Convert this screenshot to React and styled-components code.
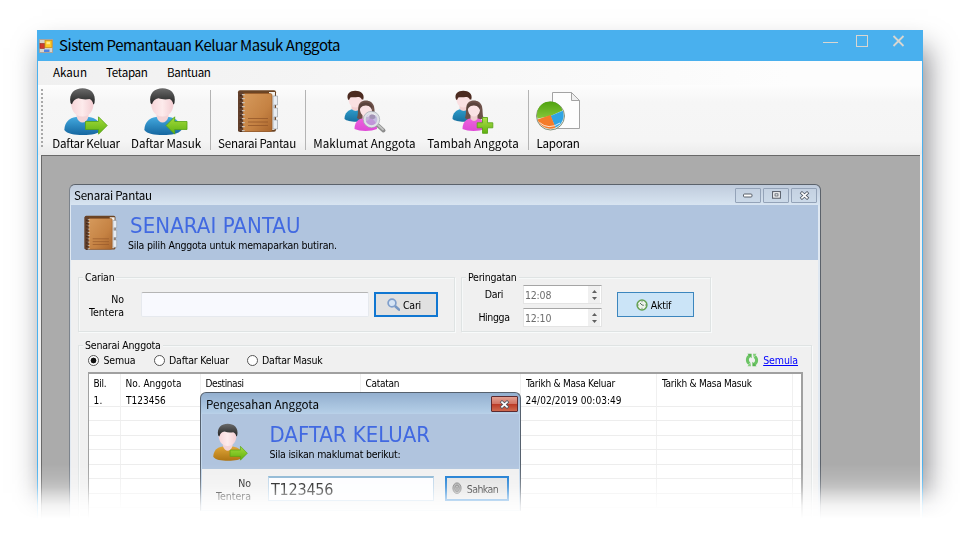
import React from "react";
import styled, { createGlobalStyle, css } from "styled-components";

const Global = createGlobalStyle`
  * { box-sizing: border-box; }
  body { margin: 0; background: #fff; overflow: hidden; }
`;

const segoe = css`font-family: "Noto Sans CJK SC", "Open Sans", sans-serif;`;
const tahoma = css`font-family: "DejaVu Sans Condensed", "DejaVu Sans", sans-serif;`;

/* ---------- page and main window ---------- */

const Stage = styled.main`
  width: 960px;
  height: 560px;
  padding: 30px 0 0 37px;
  overflow: hidden;
  color: #000;
  mask-image: linear-gradient(#000 464px, rgba(0, 0, 0, 0.87) 478px, rgba(0, 0, 0, 0.7) 487px, rgba(0, 0, 0, 0.4) 496px, rgba(0, 0, 0, 0.13) 506px, transparent 519px);
`;

const MainWindow = styled.section`
  width: 886px;
  height: 600px;
  display: flex;
  flex-direction: column;
  border: 1px solid #4ab1ef;
  border-top: 0;
  background: #f0f0f0;
  box-shadow: 5px 18px 26px rgba(20, 20, 30, 0.5);
`;

const TitleBar = styled.header`
  height: 31px;
  margin: 0 -1px;
  padding-left: 2px;
  display: flex;
  align-items: center;
  background: #49b0ee;
`;

const AppTitle = styled.h1`
  ${segoe}
  flex: 1;
  margin: 0 0 2px 6px;
  font-size: 15px;
  font-weight: 400;
  line-height: 20px;
  letter-spacing: -0.45px;
  white-space: nowrap;
`;

const WindowControls = styled.div`
  width: 83px;
  height: 13px;
  margin: 0 17px 8px 0;
  display: flex;
  align-items: center;
  justify-content: space-between;
`;

const MenuBar = styled.nav`
  height: 24px;
  flex: none;
  display: flex;
  align-items: center;
  padding: 0 0 2px 15px;
  background: linear-gradient(90deg, #f0f0f0, #fdfdfd 85%);
`;

const MenuItem = styled.span`
  ${segoe}
  width: ${(p) => p.$w}px;
  font-size: 11.6px;
  line-height: 16px;
  letter-spacing: ${(p) => p.$ls || 0}px;
  white-space: nowrap;
`;

const Toolbar = styled.div`
  height: 70px;
  flex: none;
  display: flex;
  padding: 3px 0 0 3px;
  background: linear-gradient(#fdfdfd, #f6f6f6 25%, #f5f5f5 80%, #ebebeb);
  border-radius: 0 0 3px 0;
`;

const Grip = styled.i`
  width: 2px;
  height: 60px;
  margin: 1px 9px 0 0;
  background: repeating-linear-gradient(#a9a9a9 0 2px, transparent 2px 4px);
`;

const Tool = styled.button`
  ${segoe}
  width: ${(p) => p.$w}px;
  margin: 0 ${(p) => p.$gap || 0}px 0 0;
  padding: 0;
  border: 0;
  background: none;
  display: flex;
  flex-direction: column;
  align-items: center;
  justify-content: flex-start;
  color: #000;
  font-size: 11.6px;
  line-height: 16px;
  letter-spacing: ${(p) => p.$ls || 0}px;
  white-space: nowrap;

  svg { flex: none; margin-bottom: -1px; }
`;

const ToolSeparator = styled.i`
  width: 1px;
  height: 60px;
  margin: 2px 7px 0 0;
  background: #b4b4b4;
`;

const Workspace = styled.div`
  flex: 1;
  margin: 0 2px 0 3px;
  padding: 28px 0 0 27px;
  border: solid #696969;
  border-width: 1px 0 0 1px;
  background: #ababab;
`;

/* ---------- child windows ---------- */

const ChildWindow = styled.section`
  position: relative;
  width: 752px;
  height: 420px;
  padding: 0 2px 0 1px;
  border: 1px solid #5b626b;
  border-left-color: #7c838c;
  border-radius: 6px 6px 0 0;
  background: linear-gradient(#bfcbdc, #d6e3f0 19px, #dfe8f2 22px, #e4ebf2);
`;

const Dialog = styled.section`
  position: absolute;
  left: 130px;
  top: 207px;
  width: 321px;
  height: 119px;
  padding: 0 1px 0 1px;
  border: 1px solid #56616e;
  border-bottom-color: #c4d8ea;
  border-radius: 6px 6px 0 0;
  background: linear-gradient(#93afcf, #b3cde6 19px, #bed3ea 22px, #c6dbee);
`;

const ChildTitle = styled.header`
  ${segoe}
  height: ${(p) => (p.$dialog ? 21 : 20)}px;
  display: flex;
  align-items: center;
  justify-content: space-between;
  padding: ${(p) => (p.$dialog ? "1px 1px 0 4px" : "0 1px 0 3px")};
  font-size: 11.6px;
  line-height: 18px;
  letter-spacing: ${(p) => (p.$dialog ? 0 : -0.26)}px;
`;

const CaptionButtons = styled.div`
  display: flex;
  gap: 2px;
`;

const CaptionButton = styled.button`
  width: ${(p) => (p.$danger ? 27 : 26)}px;
  height: ${(p) => (p.$danger ? 16 : 15)}px;
  padding: 0;
  display: flex;
  align-items: center;
  justify-content: center;
  border: 1px solid ${(p) => (p.$danger ? "#5c2a30" : "#94a3b8")};
  border-radius: 1px;
  background: ${(p) =>
    p.$danger
      ? "linear-gradient(#e2a092, #d27464 48%, #bb3a26 52%, #cf6a50)"
      : "linear-gradient(#c5d2e2, #cbd9e8)"};
`;

const Banner = styled.div`
  height: 55px;
  display: flex;
  padding: 9px 0 0 ${(p) => p.$left}px;
  background: #b0c4de;
`;

const BannerText = styled.div`
  ${tahoma}
  margin-left: ${(p) => p.$left}px;
`;

const BannerTitle = styled.h2`
  margin: 0 0 0 ${(p) => p.$indent || 0}px;
  font-size: 22px;
  font-weight: 400;
  line-height: 24px;
  letter-spacing: ${(p) => p.$ls || 0}px;
  color: #4169e1;
  white-space: nowrap;
`;

const BannerHint = styled.p`
  margin: 0;
  font-size: 10.5px;
  line-height: 14px;
  letter-spacing: -0.22px;
  white-space: nowrap;
`;

const ChildBody = styled.div`
  ${tahoma}
  height: 345px;
  padding: 17px 7px 0;
  background: #f0f0f0;
  font-size: 10.5px;
`;

/* ---------- form parts ---------- */

const GroupRow = styled.div`
  display: flex;
  gap: 6px;
  margin-bottom: 13px;
`;

const Group = styled.div`
  width: ${(p) => p.$w}px;
  height: ${(p) => p.$h}px;
  display: flex;
  flex-direction: column;
  border: 1px solid #dfe3e3;
  box-shadow: inset 1px 1px #f6f8f8, 1px 1px #f8fafa;
`;

const Legend = styled.span`
  align-self: flex-start;
  height: 16px;
  flex: none;
  margin: -9px 0 0 4px;
  padding: 0 2px;
  background: #f0f0f0;
  line-height: 16px;
  letter-spacing: ${(p) => p.$ls}px;
  white-space: nowrap;
`;

const SearchRow = styled.div`
  display: flex;
  padding-top: 7px;
`;

const StackedLabel = styled.label`
  width: ${(p) => p.$w}px;
  flex: none;
  padding-top: 1px;
  text-align: right;
  font-size: 10.5px;
  line-height: 12.5px;
`;

const SearchInput = styled.input`
  width: 228px;
  height: 25px;
  margin: 0 5px 0 17px;
  border: 1px solid #e6e9ee;
  border-top-color: #b5b5b5;
  border-radius: 2px;
  background: #f8f9fe;
`;

const ActionButton = styled.button`
  ${tahoma}
  width: ${(p) => p.$w || 64}px;
  height: 25px;
  padding: 0 4px 0 0;
  display: flex;
  align-items: center;
  justify-content: center;
  gap: ${(p) => p.$gap || 3}px;
  border: ${(p) => (p.$active ? "1px solid #3c86be" : "2px solid #1177d1")};
  background: ${(p) => (p.$active ? "#cbe4f7" : "#e1e1e1")};
  color: #000;
  font-size: 10.5px;
  letter-spacing: ${(p) => p.$ls || 0}px;
`;

const ReminderRow = styled.div`
  display: flex;
`;

const TimeGrid = styled.div`
  display: grid;
  grid-template-columns: 61px 79px;
  grid-auto-rows: 19px;
  row-gap: 4px;
  margin-right: 15px;
`;

const TimeLabel = styled.label`
  padding-left: 3px;
  text-align: center;
  line-height: 19px;
  letter-spacing: ${(p) => p.$ls}px;
`;

const TimeBox = styled.div`
  height: 19px;
  display: flex;
  align-items: center;
  justify-content: space-between;
  padding: 0 1px;
  border: 1px solid #e4e4e4;
  border-top-color: #a5a5a5;
  background: #fff;
  color: #6d6d6d;
  letter-spacing: -0.2px;
`;

const Stepper = styled.span`
  width: 12px;
  height: 17px;
  display: flex;
  flex-direction: column;
  align-items: center;
  justify-content: center;
  gap: 4px;
  background: #f0f0f0;
`;

const ActiveSlot = styled.div`
  padding-top: 7px;
`;

const FilterRow = styled.div`
  height: 14px;
  display: flex;
  align-items: center;
  padding: 0 13px 0 9px;
`;

const Radio = styled.label`
  width: ${(p) => p.$w}px;
  display: flex;
  align-items: center;
  gap: 4.5px;
  letter-spacing: -0.19px;
  white-space: nowrap;
`;

const RadioDot = styled.i`
  width: 11px;
  height: 11px;
  border: 1px solid #555;
  border-radius: 50%;
  background: ${(p) => (p.$on ? "radial-gradient(circle, #111 0 2.6px, #fff 3.2px)" : "#fff")};
`;

const ResetLink = styled.a`
  margin-left: auto;
  display: flex;
  align-items: center;
  gap: 4px;
  color: #0000ff;
  text-decoration: underline;
  letter-spacing: -0.1px;
`;

/* ---------- member table ---------- */

const Table = styled.div`
  width: 715px;
  height: 230px;
  margin: 5px 0 0 9px;
  border: solid #a0a0a0;
  border-width: 2px 2px 0 1px;
  background: #fff;
  font-size: 10px;
`;

const TableRow = styled.div`
  height: ${(p) => p.$h}px;
  display: grid;
  grid-template-columns: 32px 80px 160px 160px 136px 136px 1fr;
  border-bottom: 1px solid ${(p) => (p.$head ? "transparent" : "#ededed")};
`;

const Cell = styled.span`
  padding-left: ${(p) => p.$pad ?? 5}px;
  border-right: 1px solid #f0f0f0;
  line-height: ${(p) => p.$lh || 20}px;
  letter-spacing: ${(p) => p.$ls || 0}px;
  white-space: nowrap;
  &:last-child { border: 0; }
`;

/* ---------- confirmation dialog ---------- */

const DialogBody = styled.div`
  ${tahoma}
  height: 41px;
  display: flex;
  padding: 7px 0 0 7px;
  background: #f0f0f0;
`;

const DialogInput = styled.div`
  width: 166px;
  height: 25px;
  margin: 0 11px 0 17px;
  padding-left: 2px;
  border: 1px solid #b9d3e8;
  border-top: 2px solid #88b4d2;
  background: #fcfdff;
  font-size: 16px;
  line-height: 23px;
  letter-spacing: -0.22px;
`;

/* ---------- icons ---------- */

const FormIcon = () => (
  <svg width="14" height="14" viewBox="0 0 14 14">
    <rect width="14" height="14" fill="#d8d3cc" />
    <path d="M0 .5h14M.5 0v14M13.5 0v14M0 13.5h14" stroke="#aaa49b" />
    <rect x="1" y="4.5" width="4.5" height="5" fill="#d03a2c" stroke="#8f2d22" strokeWidth=".6" />
    <rect x="6" y="1.5" width="7" height="7" fill="#ffc828" stroke="#c58a10" strokeWidth=".7" />
    <rect x="7.5" y="2.7" width="3.5" height="2.5" fill="#ffe98c" />
    <rect x="5" y="10.5" width="5.5" height="2.5" fill="#4c83e6" />
  </svg>
);

const ControlGlyphs = () => (
  <svg width="83" height="13" viewBox="0 0 83 13" fill="none" stroke="#d9d6d0">
    <path d="M0 7.5h15" />
    <rect x="33.5" y=".5" width="11" height="11" />
    <path d="M70.5 1 80.5 11M80.5 1 70.5 11" strokeWidth="1.8" />
  </svg>
);

const Person = ({ width = 44, height = 48, shirt = ["#43a9df", "#1566a0"], id, dir }) => (
  <svg width={width} height={height} viewBox="0 0 44 48">
    <defs>
      <linearGradient id={`${id}s`} x1="0" y1="0" x2="0" y2="1">
        <stop stopColor={shirt[0]} /><stop offset="1" stopColor={shirt[1]} />
      </linearGradient>
      <linearGradient id={`${id}f`}><stop stopColor="#f7d5d8" /><stop offset=".5" stopColor="#fdebec" /><stop offset="1" stopColor="#f3cdd2" /></linearGradient>
      <linearGradient id={`${id}h`} x1="0" y1="0" x2="0" y2="1"><stop stopColor="#6a6a6a" /><stop offset="1" stopColor="#222" /></linearGradient>
      <linearGradient id={`${id}g`} x1="0" y1="0" x2="0" y2="1"><stop stopColor="#a4dc3c" /><stop offset="1" stopColor="#5fb010" /></linearGradient>
    </defs>
    <path d="M.3 42C.7 34 5 30 12 29h13c7 1 12 5 12.500 13-3 4-10 5-18.500 5S3 46 .3 42Z" fill={`url(#${id}s)`} />
    <path d="M12.500 22h12v6.500c-1 4-3.500 6-6 6s-5-2-6-6Z" fill="#f4d4d7" />
    <path d="M7.200 12q11-5 22.300 0c.8 9-3 16.500-11 16.500S6.200 21 7.200 12Z" fill={`url(#${id}f)`} />
    <path d="M6.500 15C4.500 5 11 .3 18.500.3S32.500 5 30.500 15q-.4 1-1.200 1.500c-.4-3-1.800-4.500-3.800-5.500-4 1-8 .3-11-.7-3.500.5-5.500 2.500-6.500 6Q7 16 6.500 15Z" fill={`url(#${id}h)`} />
    {dir === "out" ? (
      <path d="M21.500 33.500h13v-4.700l8.700 8.700-8.700 8.700v-4.700h-13Z" fill={`url(#${id}g)`} stroke="#55a313" strokeWidth=".8" />
    ) : (
      <path d="M43 33.500H30.700v-4.700L22 37.500l8.700 8.700v-4.700H43Z" fill={`url(#${id}g)`} stroke="#55a313" strokeWidth=".8" />
    )}
  </svg>
);

const Book = ({ width, height, id }) => (
  <svg width={width} height={height} viewBox="0 0 44 48">
    <defs>
      <linearGradient id={id} x1="0" y1="0" x2="1" y2="1"><stop stopColor="#d69a5c" /><stop offset=".6" stopColor="#c58243" /><stop offset="1" stopColor="#a9652c" /></linearGradient>
    </defs>
    <rect x="3" y="2.300" width="38" height="41.500" rx="2" fill="#6b4424" />
    <path d="M34 4h6l-.5 38H34Z" fill="#f4f2ee" />
    <path d="M38 8h4.500v9H39v3h3.500v9H39v3h3.500v9H38Z" fill="#e9edf2" stroke="#8d939a" strokeWidth=".6" />
    <rect x="8" y="5.500" width="29" height="38" rx="1.800" fill={`url(#${id})`} stroke="#985a28" strokeWidth=".7" />
    <rect x="3" y="3.500" width="5" height="40" rx="1" fill="#62402c" />
    <path d="M8.300 6v37" stroke="#c9c2ba" strokeWidth="2.800" strokeDasharray="1.200 2.800" />
    <path d="M5.800 7v37" stroke="#3d261b" strokeWidth="2" strokeDasharray="1.300 2.700" />
    <path d="M13 30.500h20M13 34h20M13 37.500h20" stroke="#94572a" strokeWidth=".8" />
  </svg>
);

const Couple = ({ id, children }) => (
  <svg width="44" height="48" viewBox="0 0 44 48">
    <defs>
      <linearGradient id={`${id}b`} x1="0" y1="0" x2="0" y2="1"><stop stopColor="#2e9dcb" /><stop offset="1" stopColor="#17709f" /></linearGradient>
      <linearGradient id={`${id}p`} x1="0" y1="0" x2="0" y2="1"><stop stopColor="#ec62dc" /><stop offset="1" stopColor="#df49d7" /></linearGradient>
      <linearGradient id={`${id}g`} x1="0" y1="0" x2="0" y2="1"><stop stopColor="#b0e04b" /><stop offset="1" stopColor="#5fb010" /></linearGradient>
    </defs>
    <path d="M1.500 31c0-6 4-9.500 9-10h6l4 4v8C13 34.500 4 33.500 1.500 31Z" fill={`url(#${id}b)`} />
    <path d="M8.500 15h8v6q-3.500 4-8 0Z" fill="#f2cfd1" />
    <path d="M5.500 9h14c1 5-2 10.500-7 10.500S4.800 14 5.500 9Z" fill="#fae0e2" />
    <path d="M5 11.500C3 6 7 2.700 12.300 2.700S22 6 20.300 11.500h-1.500c-.8-2-2.300-2.500-4-2.500-3 .5-6 0-7.500.5L6 12Z" fill="#4c2b20" />
    <path d="M14 30c1.500-4 .5-8 1.500-12 1-4 4-5.500 7.500-5.500s7 2 8 6c1 4 .2 8 1.500 11.500L27 33l-10-1Z" fill="#6d5149" />
    <path d="M11.500 41c0-6 3-10 8-10.500h7c5 .5 7.500 4.500 7.500 10.500-6 2.500-17 2.500-22.500 0Z" fill={`url(#${id}p)`} />
    <path d="M19.500 26h7v5q-3.500 4-7 0Z" fill="#f0cdd0" />
    <path d="M17 19q6-3 12 0c.8 5-2 9.500-6 9.500S16.300 24 17 19Z" fill="#fae2e4" />
    <path d="M16.500 22c1-3 3.500-5 6-5s5 1.500 6.500 5c1.500-4-1.500-7.500-6.500-7.500s-8 4-6 7.500Z" fill="#5b433c" />
    {children}
  </svg>
);

const Lens = () => (
  <>
    <path d="m34.500 37 6 5.500" stroke="#8c8c8c" strokeWidth="4" strokeLinecap="round" />
    <path d="m35 37 5 4.500" stroke="#c2c2c2" strokeWidth="1.800" strokeLinecap="round" />
    <circle cx="28.500" cy="31.500" r="7" fill="#b3a9d8" fillOpacity=".75" stroke="#dfe2e6" strokeWidth="2.400" />
    <circle cx="28.500" cy="31.500" r="8.200" fill="none" stroke="#98a0aa" strokeWidth=".6" />
    <path d="M24.500 29q3-5 8-2" stroke="#fff" strokeOpacity=".7" fill="none" />
  </>
);

const Report = () => (
  <svg width="44" height="48" viewBox="0 0 44 48">
    <defs>
      <linearGradient id="rg" x1="0" y1="0" x2="0" y2="1"><stop stopColor="#4fa30f" /><stop offset="1" stopColor="#86c73a" /></linearGradient>
    </defs>
    <path d="M16.500 4.500h19l8 8v28h-27Z" fill="#fdfdfd" stroke="#a3a3a3" />
    <path d="M35.500 4.500v8h8Z" fill="#f0f0f0" stroke="#a3a3a3" />
    <circle cx="14.500" cy="28" r="14" fill="#e9ece6" stroke="#78876f" strokeWidth=".9" />
    <path d="M14.500 28 1.600 30.500A13 13 0 0 1 26.500 22.500Z" fill="url(#rg)" />
    <path d="M14.500 28 26.700 22.800A13 13 0 0 1 19.500 39.500Z" fill="#2fa4e4" />
    <path d="M14.500 27 19.500 39.500A13 13 0 0 1 1.600 31.500Z" fill="#f47c2a" />
    <path d="M3.500 34.500q9 8 20.500.5" stroke="#fff" strokeOpacity=".8" fill="none" />
  </svg>
);

const MinGlyph = () => (
  <svg width="10" height="6" viewBox="0 0 10 6"><rect x=".5" y="2" width="8.500" height="3" rx="1" fill="#fff" stroke="#59606b" /></svg>
);
const MaxGlyph = () => (
  <svg width="9" height="8" viewBox="0 0 9 8"><rect x=".6" y=".6" width="7.800" height="6.600" fill="#fff" stroke="#59606b" strokeWidth="1.100" /><rect x="3" y="2.800" width="3" height="2.200" fill="none" stroke="#59606b" strokeWidth=".9" /></svg>
);
const CloseGlyph = () => (
  <svg width="11" height="9" viewBox="0 0 11 9"><path d="m3 2.200 5 4.600M8 2.200 3 6.800" stroke="#4f5763" strokeWidth="3.200" strokeLinecap="square" /><path d="m3 2.200 5 4.600M8 2.200 3 6.800" stroke="#fff" strokeWidth="1.700" strokeLinecap="square" /></svg>
);

const SearchIcon = () => (
  <svg width="13" height="13" viewBox="0 0 13 13"><path d="m8 8 4 3.600" stroke="#7597c4" strokeWidth="2.600" strokeLinecap="round" /><circle cx="5" cy="5" r="3.900" fill="#d5e4f5" stroke="#809fcb" strokeWidth="1.700" /></svg>
);
const ClockIcon = () => (
  <svg width="12" height="12" viewBox="0 0 12 12"><circle cx="6" cy="6" r="4.900" fill="#edf3ea" stroke="#63a052" strokeWidth="1.500" /><path d="M6 6 4 4M6 6l1.800.3M6 2.300v.9M6 8.800v.9M2.300 6h.8M9 6h.8" stroke="#567064" fill="none" /></svg>
);
const RefreshIcon = () => (
  <svg width="14" height="14" viewBox="0 0 14 14" fill="none" stroke="#6cc465" strokeWidth="3">
    <path d="M5 2.800C1.800 4 1.500 8.600 4.400 10.600" /><path d="M9 11.200c3.200-1.200 3.500-5.800.6-7.800" />
    <path d="M2.400.8h4.200v4.400ZM11.600 13.200H7.400V8.800Z" fill="#58b551" stroke="none" />
    <path d="M8 .8h3.600L8.600 4.600ZM6 13.200H2.400L5.400 9.400Z" fill="#83cf7b" stroke="none" />
  </svg>
);
const FingerprintIcon = () => (
  <svg width="10" height="13" viewBox="0 0 10 13" fill="none" stroke="#666" strokeWidth=".9">
    <ellipse cx="5" cy="6.200" rx="4.100" ry="5.300" fill="#a8a8a8" />
    <ellipse cx="5" cy="6.400" rx="2.200" ry="3.400" /><path d="M5 5v4.500" />
  </svg>
);
const Arrow = ({ down }) => (
  <svg width="5" height="3" viewBox="0 0 5 3"><path d={down ? "M0 0h5L2.500 3Z" : "M0 3h5L2.500 0Z"} fill="#606060" /></svg>
);

const TimeField = ({ value }) => (
  <TimeBox>
    {value}
    <Stepper><Arrow /><Arrow down /></Stepper>
  </TimeBox>
);

const HEADERS = [
  ["Bil.", -0.3, 4.5],
  ["No. Anggota", 0.04, 4.5],
  ["Destinasi", -0.38, 4.5],
  ["Catatan", -0.25, 4.5],
  ["Tarikh & Masa Keluar", -0.25, 5],
  ["Tarikh & Masa Masuk", -0.25, 5],
  ["", 0, 0],
];
const RECORD = [["1.", 0.2, 4.5], ["T123456", 0, 5], ["", 0, 0], ["", 0, 0], ["24/02/2019 00:03:49", 0.05, 4.5], ["", 0, 0], ["", 0, 0]];
const EMPTY_ROWS = [14, 15, 14, 15, 14, 15, 14];

export default function App() {
  return (
    <>
      <Global />
      <Stage>
        <MainWindow>
          <TitleBar>
            <FormIcon />
            <AppTitle>Sistem Pemantauan Keluar Masuk Anggota</AppTitle>
            <WindowControls><ControlGlyphs /></WindowControls>
          </TitleBar>
          <MenuBar>
            <MenuItem $w={53} $ls={0}>Akaun</MenuItem>
            <MenuItem $w={61} $ls={-0.28}>Tetapan</MenuItem>
            <MenuItem $w={60} $ls={-0.38}>Bantuan</MenuItem>
          </MenuBar>
          <Toolbar>
            <Grip />
            <Tool $w={68} $gap={11} $ls={-0.27}><Person id="pa" dir="out" />Daftar Keluar</Tool>
            <Tool $w={70} $gap={9} $ls={-0.07}><Person id="pb" dir="in" />Daftar Masuk</Tool>
            <ToolSeparator />
            <Tool $w={78} $gap={9} $ls={-0.26}><Book width={44} height={48} id="ba" />Senarai Pantau</Tool>
            <ToolSeparator />
            <Tool $w={103} $gap={11} $ls={0.08}><Couple id="ca"><Lens /></Couple>Maklumat Anggota</Tool>
            <Tool $w={92} $gap={9} $ls={0.04}>
              <Couple id="cb">
                <path d="M31.500 29.500h5v5.300h5.300v5h-5.300v5.500h-5v-5.500h-5.300v-5h5.300Z" fill="url(#cbg)" stroke="#5ba51a" strokeWidth=".9" />
              </Couple>
              Tambah Anggota
            </Tool>
            <ToolSeparator />
            <Tool $w={44} $ls={-0.28}><Report />Laporan</Tool>
          </Toolbar>
          <Workspace>
            <ChildWindow>
              <ChildTitle>
                Senarai Pantau
                <CaptionButtons>
                  <CaptionButton><MinGlyph /></CaptionButton>
                  <CaptionButton><MaxGlyph /></CaptionButton>
                  <CaptionButton><CloseGlyph /></CaptionButton>
                </CaptionButtons>
              </ChildTitle>
              <Banner $left={10.5}>
                <Book width={36} height={39} id="bb" />
                <BannerText $left={10.5}>
                  <BannerTitle $indent={2} $ls={0.1}>SENARAI PANTAU</BannerTitle>
                  <BannerHint>Sila pilih Anggota untuk memaparkan butiran.</BannerHint>
                </BannerText>
              </Banner>
              <ChildBody>
                <GroupRow>
                  <Group $w={377} $h={55}>
                    <Legend $ls={-0.2}>Carian</Legend>
                    <SearchRow>
                      <StackedLabel $w={45}>No<br />Tentera</StackedLabel>
                      <SearchInput />
                      <ActionButton $ls={-0.2}><SearchIcon />Cari</ActionButton>
                    </SearchRow>
                  </Group>
                  <Group $w={250} $h={55}>
                    <Legend $ls={-0.24}>Peringatan</Legend>
                    <ReminderRow>
                      <TimeGrid>
                        <TimeLabel $ls={-0.3}>Dari</TimeLabel><TimeField value="12:08" />
                        <TimeLabel $ls={-0.38}>Hingga</TimeLabel><TimeField value="12:10" />
                      </TimeGrid>
                      <ActiveSlot>
                        <ActionButton $w={77} $active $ls={-0.25}><ClockIcon />Aktif</ActionButton>
                      </ActiveSlot>
                    </ReminderRow>
                  </Group>
                </GroupRow>
                <Group $w={734} $h={260}>
                  <Legend $ls={-0.2}>Senarai Anggota</Legend>
                  <FilterRow>
                    <Radio $w={65.5}><RadioDot $on />Semua</Radio>
                    <Radio $w={93}><RadioDot />Daftar Keluar</Radio>
                    <Radio $w={93}><RadioDot />Daftar Masuk</Radio>
                    <ResetLink><RefreshIcon />Semula</ResetLink>
                  </FilterRow>
                  <Table>
                    <TableRow $h={18} $head>
                      {HEADERS.map(([text, ls, pad], i) => <Cell key={i} $ls={ls} $pad={pad}>{text}</Cell>)}
                    </TableRow>
                    <TableRow $h={15}>
                      {RECORD.map(([text, ls, pad], i) => <Cell key={i} $ls={ls} $pad={pad} $lh={18}>{text}</Cell>)}
                    </TableRow>
                    {EMPTY_ROWS.map((h, row) => (
                      <TableRow key={row} $h={h}>
                        {HEADERS.map((_, i) => <Cell key={i} $lh={10} />)}
                      </TableRow>
                    ))}
                  </Table>
                </Group>
              </ChildBody>
              <Dialog>
                <ChildTitle $dialog>
                  Pengesahan Anggota
                  <CaptionButton $danger><CloseGlyph /></CaptionButton>
                </ChildTitle>
                <Banner $left={11}>
                  <Person width={35} height={39} id="pc" dir="out" shirt={["#e0a638", "#ad7412"]} />
                  <BannerText $left={21.5}>
                    <BannerTitle>DAFTAR KELUAR</BannerTitle>
                    <BannerHint>Sila isikan maklumat berikut:</BannerHint>
                  </BannerText>
                </Banner>
                <DialogBody>
                  <StackedLabel $w={42}>No<br />Tentera</StackedLabel>
                  <DialogInput>T123456</DialogInput>
                  <ActionButton $ls={-0.55} $gap={5}><FingerprintIcon />Sahkan</ActionButton>
                </DialogBody>
              </Dialog>
            </ChildWindow>
          </Workspace>
        </MainWindow>
      </Stage>
    </>
  );
}
